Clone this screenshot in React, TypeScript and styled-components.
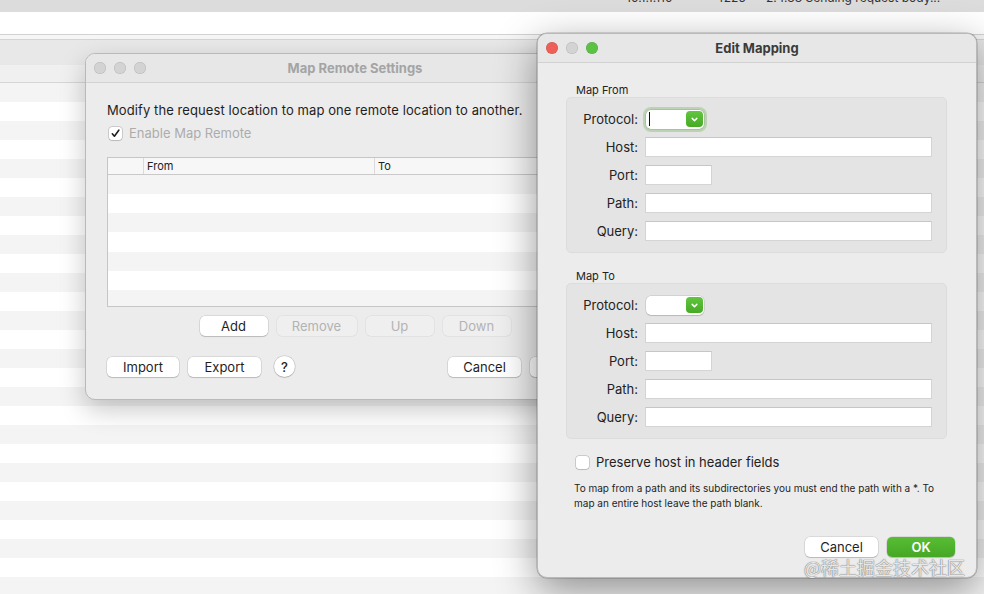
import styled, { createGlobalStyle } from "styled-components";

const GlobalStyle = createGlobalStyle`
  html, body {
    margin: 0;
    padding: 0;
  }
  body {
    font-family: Inter, "Noto Sans", sans-serif;
    color: #222;
    overflow: hidden;
    -webkit-font-smoothing: antialiased;
  }
  * {
    box-sizing: border-box;
  }
`;

const Chevron = () => (
  <svg width="9" height="9" viewBox="0 0 9 9">
    <path d="M2.2 3.4 L4.5 5.7 L6.8 3.4" fill="none" stroke="#fff" strokeWidth="1.5" strokeLinecap="round" strokeLinejoin="round" />
  </svg>
);

const Check = () => (
  <svg width="11" height="11" viewBox="0 0 11 11">
    <path d="M2.3 5.8 L4.4 8.2 L8.8 2.2" fill="none" stroke="#1d1d1d" strokeWidth="1.6" strokeLinecap="round" strokeLinejoin="round" />
  </svg>
);

const App = () => {
  const fromRows = ["Host:", "Port:", "Path:", "Query:"];
  return (
    <>
      <GlobalStyle />
      <Screen>
        <StatusStrip>
          <StatusText>10.1.1.110</StatusText>
          <StatusText>4225</StatusText>
          <StatusText>2.4.33 Sending request body...</StatusText>
        </StatusStrip>
        <AddressBar />
        <Gutter />
        <ListHeader />
        <ListSubHeader />
        <Stripes />

        <Window $left={85} $top={53} $width={540} $height={347} $shadow="0 10px 26px rgba(0,0,0,0.22)">
          <TitleBar>
            <Lights>
              <Light $color="#d3d3d3" />
              <Light $color="#d3d3d3" />
              <Light $color="#d3d3d3" />
            </Lights>
            <Title $active={false}>Map Remote Settings</Title>
          </TitleBar>
          <RemoteBody>
            <Lead>Modify the request location to map one remote location to another.</Lead>
            <CheckRow $top={7}>
              <CheckBox>
                <Check />
              </CheckBox>
              <CheckLabel $disabled>Enable Map Remote</CheckLabel>
            </CheckRow>
            <Table>
              <TableHead>
                <HeadCell $width={35} />
                <HeadCell $width={231}>From</HeadCell>
                <HeadCell>To</HeadCell>
              </TableHead>
              <TableRows />
            </Table>
            <EditButtons>
              <Button $width={68}>Add</Button>
              <Button $width={80} $disabled>Remove</Button>
              <Button $width={68} $disabled>Up</Button>
              <Button $width={68} $disabled>Down</Button>
            </EditButtons>
            <RemoteFooter>
              <Button $width={72}>Import</Button>
              <Button $width={73}>Export</Button>
              <HelpButton>?</HelpButton>
              <Spacer />
              <Button $width={73}>Cancel</Button>
              <Button $width={73}>OK</Button>
            </RemoteFooter>
          </RemoteBody>
        </Window>

        <Window
          $left={537}
          $top={33}
          $width={440}
          $height={545}
          $shadow="0 12px 40px rgba(0,0,0,0.42), 0 0 0 0.5px rgba(0,0,0,0.25)"
        >
          <TitleBar>
            <Lights>
              <Light $color="#ee5f57" />
              <Light $color="#d3d3d3" />
              <Light $color="#5cc244" />
            </Lights>
            <Title $active>Edit Mapping</Title>
          </TitleBar>
          <EditBody>
            {["Map From", "Map To"].map((section, i) => (
              <Section key={section} $first={i === 0}>
                <SectionLabel>{section}</SectionLabel>
                <GroupBox>
                  <FieldLabel>Protocol:</FieldLabel>
                  <Select $focused={i === 0}>
                    {i === 0 ? <Caret /> : <span />}
                    <Stepper>
                      <Chevron />
                    </Stepper>
                  </Select>
                  {fromRows.map((label) => (
                    <Field key={label}>
                      <FieldLabel>{label}</FieldLabel>
                      <Input $short={label === "Port:"} />
                    </Field>
                  ))}
                </GroupBox>
              </Section>
            ))}
            <CheckRow $top={15} $indent={10}>
              <CheckBox />
              <CheckLabel>Preserve host in header fields</CheckLabel>
            </CheckRow>
            <Note>
              To map from a path and its subdirectories you must end the path with a *. To
              <br />
              map an entire host leave the path blank.
            </Note>
          </EditBody>
          <EditFooter>
            <Button $width={73}>Cancel</Button>
            <Button $width={68} $primary>OK</Button>
          </EditFooter>
        </Window>

        <Watermark>@稀土掘金技术社区</Watermark>
      </Screen>
    </>
  );
};

const Screen = styled.div`
  position: relative;
  width: 984px;
  height: 594px;
  overflow: hidden;
  background: #fff;
  display: flex;
  flex-direction: column;
`;

const StatusStrip = styled.div`
  height: 12px;
  flex-shrink: 0;
  background: #dcdcdc;
  overflow: hidden;
  display: grid;
  grid-template-columns: 90px 50px auto;
  padding-left: 626px;
`;

const StatusText = styled.span`
  font-size: 12px;
  line-height: 12px;
  color: #333;
  margin-top: -8px;
  white-space: nowrap;
`;

const AddressBar = styled.div`
  height: 23px;
  flex-shrink: 0;
  background: #fff;
  border-bottom: 1px solid #d2d2d2;
`;

const Gutter = styled.div`
  height: 5px;
  flex-shrink: 0;
  background: #f6f6f6;
  border-bottom: 1px solid #d4d4d4;
`;

const ListHeader = styled.div`
  height: 25px;
  flex-shrink: 0;
  background: #e8e8e8;
`;

const ListSubHeader = styled.div`
  height: 18px;
  flex-shrink: 0;
  background: #f0f0f0;
  border-bottom: 1px solid #d6d6d6;
`;

const Stripes = styled.div`
  flex: 1;
  background: repeating-linear-gradient(#f4f4f4 0 19px, #ffffff 19px 38px);
`;

const Window = styled.div<{ $left: number; $top: number; $width: number; $height: number; $shadow: string }>`
  position: absolute;
  left: ${({ $left }) => $left}px;
  top: ${({ $top }) => $top}px;
  width: ${({ $width }) => $width}px;
  height: ${({ $height }) => $height}px;
  border-radius: 10px;
  background: #ececec;
  box-shadow: ${({ $shadow }) => $shadow};
  border: 0.5px solid #b9b9b9;
  overflow: hidden;
  display: flex;
  flex-direction: column;
`;

const TitleBar = styled.div`
  height: 29px;
  flex-shrink: 0;
  display: grid;
  grid-template-columns: 1fr auto 1fr;
  align-items: center;
  background: #e7e7e7;
  border-bottom: 1px solid #d2d2d2;
`;

const Lights = styled.div`
  display: flex;
  gap: 8px;
  padding-left: 8px;
`;

const Light = styled.span<{ $color: string }>`
  width: 12px;
  height: 12px;
  border-radius: 50%;
  background: ${({ $color }) => $color};
  box-shadow: inset 0 0 0 0.5px rgba(0, 0, 0, 0.15);
`;

const Title = styled.div<{ $active: boolean }>`
  font-size: 13px;
  font-weight: 700;
  color: ${({ $active }) => ($active ? "#3a3a3a" : "#a4a4a4")};
`;

const RemoteBody = styled.div`
  display: flex;
  flex-direction: column;
  padding: 19px 21px 0 21px;
`;

const Lead = styled.div`
  font-size: 13px;
  line-height: 16px;
  letter-spacing: 0.09px;
  color: #1e1e1e;
  white-space: nowrap;
`;

const CheckRow = styled.div<{ $top: number; $indent?: number }>`
  display: flex;
  align-items: center;
  gap: 7px;
  height: 16px;
  margin-top: ${({ $top }) => $top}px;
  padding-left: ${({ $indent = 2 }) => $indent}px;
`;

const CheckBox = styled.span`
  width: 13px;
  height: 13px;
  border-radius: 3px;
  background: #fff;
  box-shadow: 0 0 0 0.5px rgba(0, 0, 0, 0.28), 0 1px 1px rgba(0, 0, 0, 0.08);
  display: flex;
  align-items: center;
  justify-content: center;
`;

const CheckLabel = styled.span<{ $disabled?: boolean }>`
  font-size: 13px;
  color: ${({ $disabled }) => ($disabled ? "#acacac" : "#222")};
`;

const Table = styled.div`
  margin-top: 16px;
  height: 150px;
  border: 1px solid #c6c6c6;
  background: #fff;
  display: flex;
  flex-direction: column;
`;

const TableHead = styled.div`
  height: 17px;
  flex-shrink: 0;
  display: flex;
  background: #f7f7f7;
  border-bottom: 1px solid #c9c9c9;
`;

const HeadCell = styled.div<{ $width?: number }>`
  ${({ $width }) => ($width ? `width: ${$width}px;` : "flex: 1;")}
  font-size: 11px;
  line-height: 16px;
  padding-left: 3px;
  color: #222;
  & + & {
    border-left: 1px solid #dadada;
  }
`;

const TableRows = styled.div`
  flex: 1;
  background: repeating-linear-gradient(#f4f4f4 0 19px, #ffffff 19px 38.5px);
`;

const EditButtons = styled.div`
  margin-top: 9px;
  display: flex;
  justify-content: center;
  gap: 9px;
`;

const Button = styled.button<{ $width: number; $disabled?: boolean; $primary?: boolean }>`
  width: ${({ $width }) => $width}px;
  height: 20px;
  padding: 0;
  border: none;
  border-radius: 5px;
  font-family: inherit;
  font-size: 13px;
  font-weight: ${({ $primary }) => ($primary ? 600 : 400)};
  color: ${({ $disabled, $primary }) => ($primary ? "#fff" : $disabled ? "#b3b3b3" : "#1f1f1f")};
  background: ${({ $disabled, $primary }) =>
    $primary ? "linear-gradient(#58bd35, #46a724)" : $disabled ? "#efefef" : "#fff"};
  box-shadow: ${({ $disabled }) =>
    $disabled
      ? "0 0 0 0.5px rgba(0,0,0,0.08)"
      : "0 0 0 0.5px rgba(0,0,0,0.16), 0 1px 1px rgba(0,0,0,0.14)"};
`;

const RemoteFooter = styled.div`
  margin-top: 20px;
  display: flex;
  align-items: center;
  gap: 9px;
`;

const HelpButton = styled.span`
  width: 21px;
  height: 21px;
  margin-left: 4px;
  border-radius: 50%;
  background: #fff;
  box-shadow: 0 0 0 0.5px rgba(0, 0, 0, 0.18), 0 1px 1px rgba(0, 0, 0, 0.14);
  display: flex;
  align-items: center;
  justify-content: center;
  font-size: 13px;
  font-weight: 500;
  color: #222;
`;

const Spacer = styled.span`
  flex: 1;
`;

const EditBody = styled.div`
  flex: 1;
  display: flex;
  flex-direction: column;
  padding: 21px 29px 0 28px;
`;

const Section = styled.div<{ $first: boolean }>`
  margin-top: ${({ $first }) => ($first ? 0 : 17)}px;
`;

const SectionLabel = styled.div`
  font-size: 11px;
  line-height: 13px;
  padding-left: 10px;
  color: #222;
`;

const GroupBox = styled.div`
  display: grid;
  grid-template-columns: 71px 1fr;
  column-gap: 7px;
  row-gap: 8px;
  align-items: center;
  padding: 11px 14px 11px 0;
  background: #e4e4e4;
  border: 1px solid #dcdcdc;
  border-radius: 5px;
`;

const Field = styled.div`
  display: contents;
`;

const FieldLabel = styled.div`
  font-size: 13px;
  line-height: 20px;
  text-align: right;
  color: #222;
`;

const Select = styled.div<{ $focused: boolean }>`
  width: 58px;
  height: 19px;
  margin-left: 1px;
  display: flex;
  align-items: center;
  justify-content: space-between;
  padding: 0 1px 0 3px;
  background: #fff;
  border-radius: 5px;
  box-shadow: ${({ $focused }) =>
    $focused
      ? "0 0 0 0.5px rgba(0,0,0,0.18), 0 0 0 3px rgba(140, 190, 120, 0.45)"
      : "0 0 0 0.5px rgba(0,0,0,0.16), 0 1px 1px rgba(0,0,0,0.12)"};
`;

const Caret = styled.span`
  width: 1px;
  height: 14px;
  background: #111;
`;

const Stepper = styled.span`
  width: 17px;
  height: 16px;
  border-radius: 4px;
  background: linear-gradient(#62c63f, #47a925);
  display: flex;
  align-items: center;
  justify-content: center;
`;

const Input = styled.div<{ $short?: boolean }>`
  width: ${({ $short }) => ($short ? "67px" : "100%")};
  height: 20px;
  background: #fff;
  border: 1px solid #d4d4d4;
  border-top-color: #c6c6c6;
`;

const Note = styled.div`
  margin-top: 11px;
  padding-left: 8px;
  font-size: 10px;
  line-height: 15px;
  color: #1e1e1e;
  white-space: nowrap;
`;

const EditFooter = styled.div`
  display: flex;
  justify-content: flex-end;
  gap: 9px;
  padding: 0 21px 20px 0;
`;

const Watermark = styled.div`
  position: absolute;
  left: 804px;
  top: 557px;
  font-family: "Noto Sans CJK SC", "Noto Sans", sans-serif;
  font-size: 18px;
  line-height: 20px;
  color: rgba(255, 255, 255, 0.85);
  text-shadow: 0 0 1px rgba(90, 90, 90, 0.8), 0 0 1px rgba(90, 90, 90, 0.8);
  white-space: nowrap;
`;

export default App;
